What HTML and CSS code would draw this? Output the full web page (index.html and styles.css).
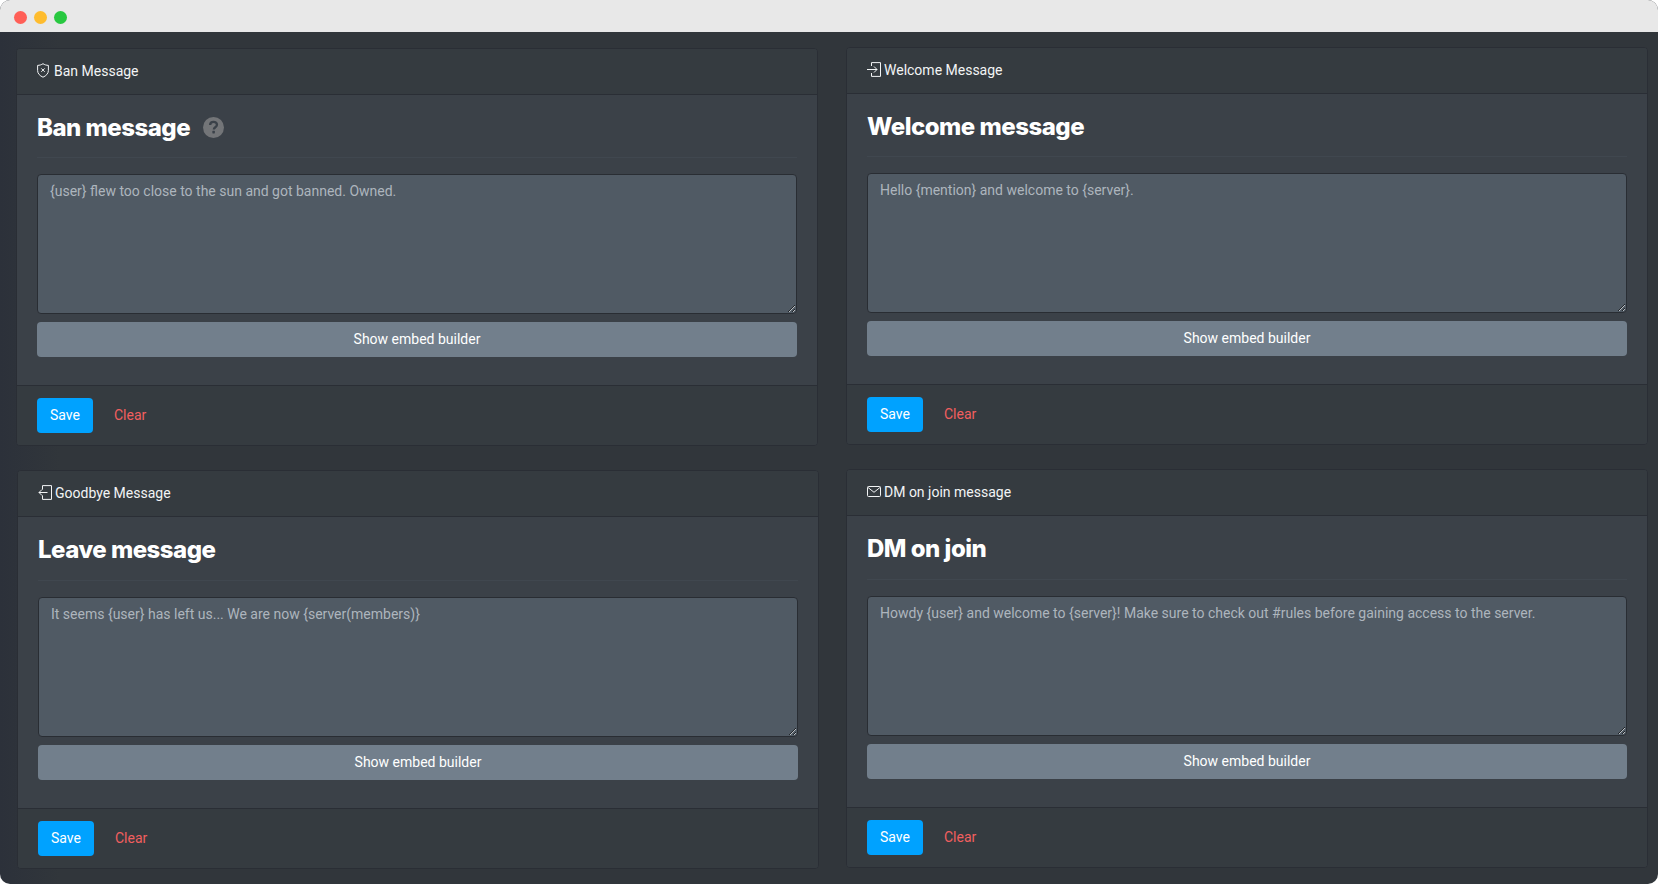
FILE: index.html
```html
<!DOCTYPE html>
<html lang="en">
<head>
    <meta charset="UTF-8">
    <meta name="viewport" content="width=device-width, initial-scale=1.0">
    <title>Server Messages</title>
    <link rel="stylesheet" href="styles.css">
</head>
<body>
    <div class="window">
        <div class="titlebar">
            <span class="dot dot-red"></span>
            <span class="dot dot-yellow"></span>
            <span class="dot dot-green"></span>
        </div>

        <main class="columns">
            <div class="column">
                <section class="card">
                    <div class="card-header">
                        <svg class="card-icon card-icon-shield" viewBox="0 0 12 15" fill="none" stroke="currentColor" stroke-width="1">
                            <path d="M6 .7C7.500 1.800 9.500 2.300 11.400 2.400V7.500c0 3-2.200 5.300-5.400 6.700C2.800 12.800.6 10.500.6 7.500V2.400C2.500 2.300 4.500 1.800 6 .7z"/>
                            <path d="M4.300 5.400l3.400 3.400M7.700 5.400L4.300 8.800"/>
                        </svg>
                        Ban Message
                    </div>
                    <div class="card-body">
                        <div class="card-title">
                            <h2>Ban message</h2>
                            <svg class="help-icon" viewBox="0 0 20 20">
                                <circle cx="10" cy="10" r="10" fill="#737578"/>
                                <path d="M6.800 7.600c0-1.900 1.400-3 3.300-3 1.800 0 3.200 1.100 3.200 2.800 0 2.400-3 2.300-3 4.500" fill="none" stroke="#3a4149" stroke-width="2.200"/>
                                <rect x="8.900" y="13.200" width="2.400" height="2.400" rx=".5" fill="#3a4149"/>
                            </svg>
                        </div>
                        <textarea class="message-input" spellcheck="false">{user} flew too close to the sun and got banned. Owned.</textarea>
                        <button class="btn btn-embed">Show embed builder</button>
                    </div>
                    <div class="card-footer">
                        <button class="btn btn-save">Save</button>
                        <button class="btn btn-clear">Clear</button>
                    </div>
                </section>

                <section class="card card-nudge">
                    <div class="card-header">
                        <svg class="card-icon" viewBox="0 0 14 15" fill="none" stroke="currentColor" stroke-width="1">
                            <path d="M4.500 4.500V.6h9v13.800h-9v-3.900"/>
                            <path d="M9.500 7.500H1M4 4.500l-3 3 3 3"/>
                        </svg>
                        Goodbye Message
                    </div>
                    <div class="card-body">
                        <div class="card-title">
                            <h2>Leave message</h2>
                        </div>
                        <textarea class="message-input" spellcheck="false">It seems {user} has left us... We are now {server(members)}</textarea>
                        <button class="btn btn-embed">Show embed builder</button>
                    </div>
                    <div class="card-footer">
                        <button class="btn btn-save">Save</button>
                        <button class="btn btn-clear">Clear</button>
                    </div>
                </section>
            </div>

            <div class="column column-right">
                <section class="card">
                    <div class="card-header">
                        <svg class="card-icon" viewBox="0 0 14 15" fill="none" stroke="currentColor" stroke-width="1">
                            <path d="M4.500 4V.6h9v13.800h-9V11"/>
                            <path d="M0 7.500h10M7 4.500l3 3-3 3"/>
                        </svg>
                        Welcome Message
                    </div>
                    <div class="card-body">
                        <div class="card-title">
                            <h2>Welcome message</h2>
                        </div>
                        <textarea class="message-input" spellcheck="false">Hello {mention} and welcome to {server}.</textarea>
                        <button class="btn btn-embed">Show embed builder</button>
                    </div>
                    <div class="card-footer">
                        <button class="btn btn-save">Save</button>
                        <button class="btn btn-clear">Clear</button>
                    </div>
                </section>

                <section class="card">
                    <div class="card-header">
                        <svg class="card-icon" viewBox="0 0 14 15" fill="none" stroke="currentColor" stroke-width="1">
                            <rect x=".5" y="2.500" width="13" height="10" rx="1"/>
                            <path d="M.8 3.300L7 8.300l6.200-5"/>
                        </svg>
                        DM on join message
                    </div>
                    <div class="card-body">
                        <div class="card-title">
                            <h2>DM on join</h2>
                        </div>
                        <textarea class="message-input" spellcheck="false">Howdy {user} and welcome to {server}! Make sure to check out #rules before gaining access to the server.</textarea>
                        <button class="btn btn-embed">Show embed builder</button>
                    </div>
                    <div class="card-footer">
                        <button class="btn btn-save">Save</button>
                        <button class="btn btn-clear">Clear</button>
                    </div>
                </section>
            </div>
        </main>
    </div>
</body>
</html>
```

FILE: styles.css
```css
* {
    box-sizing: border-box;
}

html, body {
    height: 100%;
}

body {
    margin: 0;
    background: #fff;
    font-family: Roboto, sans-serif;
    font-size: 14px;
    color: #fff;
    overflow: hidden;
}

.window {
    height: 884px;
    border-radius: 10px;
    overflow: hidden;
    background: linear-gradient(90deg, #2c313a 0, #31363b 60px, #31363b 100%);
}

.titlebar {
    display: flex;
    align-items: center;
    gap: 7px;
    height: 32px;
    padding: 2px 0 0 13.5px;
    background: #e8e8e8;
}

.dot {
    width: 13px;
    height: 13px;
    border-radius: 50%;
}

.dot-red { background: #ff5f57; }
.dot-yellow { background: #febc2e; }
.dot-green { background: #28c840; }

.columns {
    display: grid;
    grid-template-columns: 802px 802px;
    column-gap: 28px;
    padding: 16px 10px 0 16px;
}

.column {
    display: flex;
    flex-direction: column;
    gap: 24px;
}

.column-right {
    margin-top: -1px;
}

.card {
    border: 1px solid #2a2e35;
    border-radius: 4px;
    height: 398px;
    display: flex;
    flex-direction: column;
    background: #3b4148;
}

/* second row sits a pixel taller than the first */
.card:last-child {
    height: 399px;
}

.card:last-child .card-title {
    height: 64px;
    padding-top: 2px;
}

.card-nudge {
    margin-left: 1px;
    margin-right: -1px;
}

.card-header {
    display: flex;
    align-items: center;
    height: 46px;
    padding: 0 20px 2px;
    background: #353b40;
    border-bottom: 1px solid #2a2e35;
    border-radius: 3px 3px 0 0;
    color: #f2f4f5;
}

.card-icon {
    width: 14px;
    height: 15px;
    margin: -1px 3px 0 0;
}

.card-icon-shield {
    width: 12px;
    margin-right: 5px;
}

.card-body {
    flex: 1;
    display: flex;
    flex-direction: column;
    padding: 0 20px;
}

.card-title {
    display: flex;
    align-items: center;
    gap: 13px;
    height: 63px;
    padding-top: 3px;
    border-bottom: 1px solid #40474f;
    margin-bottom: 16px;
    flex-shrink: 0;
}

.card-title h2 {
    margin: 0;
    font-family: Inter, sans-serif;
    font-size: 24px;
    font-weight: 800;
    letter-spacing: -0.5px;
    color: #fff;
}

.help-icon {
    width: 21px;
    height: 21px;
}

.message-input {
    display: block;
    width: 100%;
    height: 140px;
    padding: 6px 12px;
    border: 1px solid #292d33;
    border-radius: 4px;
    outline: none;
    background: #505a64;
    color: #adb5bd;
    font-family: Roboto, sans-serif;
    font-size: 14px;
    line-height: 1.5;
}

.btn {
    height: 35px;
    padding: 0 0 2px;
    border: 0;
    border-radius: 4px;
    font-family: Roboto, sans-serif;
    font-size: 14px;
    color: #fff;
}

.btn-embed {
    width: 100%;
    margin-top: 8px;
    background: #727f8c;
}

.card-footer {
    display: flex;
    align-items: center;
    gap: 9px;
    height: 60px;
    flex-shrink: 0;
    padding: 0 20px;
    background: #353b40;
    border-top: 1px solid #2a2e35;
    border-radius: 0 0 3px 3px;
}

.btn-save {
    width: 56px;
    background: #00a2ff;
}

.btn-clear {
    padding: 0 12px 2px;
    background: none;
    color: #f25f5f;
}
```
